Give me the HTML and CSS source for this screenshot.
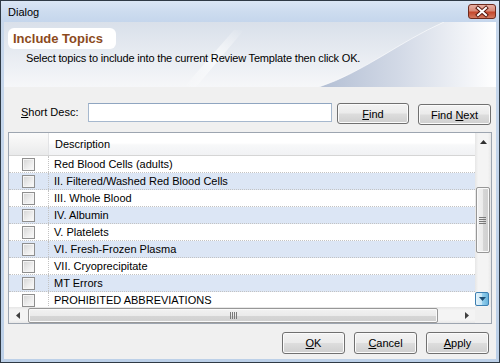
FILE: index.html
```html
<!DOCTYPE html>
<html>
<head>
<meta charset="utf-8">
<title>Dialog</title>
<link rel="stylesheet" href="styles.css">
</head>
<body>
<div class="window">
  <div class="titlebar">
    <span class="title">Dialog</span>
    <div class="close">
      <svg width="28" height="15" viewBox="0 0 28 15">
        <path d="M10 4 L18 11 M18 4 L10 11" stroke="#5a1a10" stroke-width="4" stroke-linecap="square"/>
        <path d="M10 4 L18 11 M18 4 L10 11" stroke="#ffffff" stroke-width="2" stroke-linecap="square"/>
      </svg>
    </div>
  </div>
  <div class="client">
    <div class="banner">
      <svg class="banner-bg" width="492" height="65" viewBox="0 0 492 65">
        <defs>
          <linearGradient id="lg" x1="0" y1="0" x2="0" y2="1">
            <stop offset="0" stop-color="#d9e0ea"/>
            <stop offset="1" stop-color="#f6f7f9"/>
          </linearGradient>
          <linearGradient id="rg" x1="0" y1="0" x2="1" y2="0">
            <stop offset="0" stop-color="#b3bfd4"/>
            <stop offset="0.45" stop-color="#d2d9e6"/>
            <stop offset="1" stop-color="#ffffff"/>
          </linearGradient>
          <linearGradient id="hl" x1="0" y1="1" x2="1" y2="0">
            <stop offset="0" stop-color="#ffffff" stop-opacity="0"/>
            <stop offset="0.5" stop-color="#ffffff" stop-opacity="0.7"/>
            <stop offset="1" stop-color="#ffffff" stop-opacity="0"/>
          </linearGradient>
        </defs>
        <rect x="0" y="0" width="492" height="65" fill="url(#lg)"/>
        <path d="M180 65 L230 8 L240 8 L192 65 Z" fill="url(#hl)"/>
        <path d="M315 65 C360 50 395 20 440 0 L492 0 L492 65 Z" fill="url(#rg)"/>
        <path d="M315 65 C360 50 395 20 440 0" fill="none" stroke="#ffffff" stroke-opacity="0.6" stroke-width="1"/>
      </svg>
      <div class="banner-title">Include Topics</div>
      <div class="banner-sub">Select topics to include into the current Review Template then click OK.</div>
    </div>

    <div class="search">
      <span class="label"><u>S</u>hort Desc:</span>
      <div class="textbox"></div>
      <div class="btn btn-find"><span><u>F</u>ind</span></div>
      <div class="btn btn-next"><span>Find <u>N</u>ext</span></div>
    </div>

    <div class="grid">
      <div class="grid-main">
        <div class="row head">
          <div class="cell chk"></div>
          <div class="cell desc">Description</div>
        </div>
        <div class="row"><div class="cell chk"><span class="box"></span></div><div class="cell desc">Red Blood Cells (adults)</div></div>
        <div class="row alt"><div class="cell chk"><span class="box"></span></div><div class="cell desc">II. Filtered/Washed Red Blood Cells</div></div>
        <div class="row"><div class="cell chk"><span class="box"></span></div><div class="cell desc">III. Whole Blood</div></div>
        <div class="row alt"><div class="cell chk"><span class="box"></span></div><div class="cell desc">IV. Albumin</div></div>
        <div class="row"><div class="cell chk"><span class="box"></span></div><div class="cell desc">V. Platelets</div></div>
        <div class="row alt"><div class="cell chk"><span class="box"></span></div><div class="cell desc">VI. Fresh-Frozen Plasma</div></div>
        <div class="row"><div class="cell chk"><span class="box"></span></div><div class="cell desc">VII. Cryoprecipitate</div></div>
        <div class="row alt"><div class="cell chk"><span class="box"></span></div><div class="cell desc">MT Errors</div></div>
        <div class="row"><div class="cell chk"><span class="box"></span></div><div class="cell desc">PROHIBITED ABBREVIATIONS</div></div>
      </div>
      <div class="vscroll">
        <div class="arrow-v">
          <svg width="7" height="4" viewBox="0 0 7 4"><path d="M0 4 L3.5 0 L7 4 Z" fill="#303030"/></svg>
        </div>
        <div class="vthumb">
          <svg width="7" height="7" viewBox="0 0 7 7"><path d="M0 0.5 H7 M0 2.5 H7 M0 4.5 H7 M0 6.5 H7" stroke="#7a7a7a" stroke-width="1"/></svg>
        </div>
        <div class="vtrack"></div>
        <div class="down-btn">
          <svg width="7" height="4" viewBox="0 0 7 4"><path d="M0 0 L3.5 4 L7 0 Z" fill="#1e4e74"/></svg>
        </div>
      </div>
      <div class="hscroll">
        <div class="arrow-h">
          <svg width="4" height="7" viewBox="0 0 4 7"><path d="M4 0 L0 3.5 L4 7 Z" fill="#404040"/></svg>
        </div>
        <div class="hthumb">
          <svg width="7" height="7" viewBox="0 0 7 7"><path d="M0.5 0 V7 M2.5 0 V7 M4.5 0 V7 M6.5 0 V7" stroke="#7a7a7a" stroke-width="1"/></svg>
        </div>
        <div class="htrack"></div>
        <div class="arrow-h">
          <svg width="4" height="7" viewBox="0 0 4 7"><path d="M0 0 L4 3.5 L0 7 Z" fill="#404040"/></svg>
        </div>
      </div>
      <div class="corner"></div>
    </div>

    <div class="actions">
      <div class="btn btn-act"><span><u>O</u>K</span></div>
      <div class="btn btn-act"><span><u>C</u>ancel</span></div>
      <div class="btn btn-act"><span><u>A</u>pply</span></div>
    </div>
  </div>
</div>
</body>
</html>
```

FILE: styles.css
```css
html, body {
  margin: 0;
  padding: 0;
  background: #ffffff;
}

body {
  font-family: "Liberation Sans", Arial, sans-serif;
  font-size: 11px;
  color: #000000;
}

.window {
  width: 500px;
  height: 363px;
  box-sizing: border-box;
  border: 1px solid #2f3a45;
  background: linear-gradient(#c8d8ec, #bcd0e8);
  display: flex;
  flex-direction: column;
}

.titlebar {
  height: 21px;
  flex: none;
  display: flex;
  align-items: center;
  padding: 0 3px 0 7px;
  background: linear-gradient(#dae6f4 0%, #cddcef 50%, #c5d6ec 100%);
}

.title {
  font-size: 11px;
  color: #000000;
}

.close {
  margin-left: auto;
  width: 28px;
  height: 15px;
  box-sizing: border-box;
  border: 1px solid #6e2a1c;
  border-radius: 3px;
  background: linear-gradient(#e8b0a4 0%, #d88a78 45%, #c4472c 55%, #d3795f 100%);
  display: flex;
  align-items: center;
  justify-content: center;
  overflow: hidden;
}

.close svg {
  display: block;
  margin: -1px;
}

.client {
  flex: 1;
  margin: 0 3px 3px 3px;
  background: #f0f0f0;
  display: flex;
  flex-direction: column;
  min-height: 0;
}

.banner {
  height: 65px;
  flex: none;
  position: relative;
  overflow: hidden;
  box-sizing: border-box;
  padding: 6px 0 0 4px;
}

.banner-bg {
  position: absolute;
  left: 0;
  top: 0;
  z-index: 0;
}

.banner-title {
  position: relative;
  z-index: 1;
  display: inline-block;
  height: 21px;
  line-height: 21px;
  padding: 0 13px 0 5px;
  background: #ffffff;
  border-radius: 6px;
  font-size: 13px;
  font-weight: bold;
  color: #8c4a1c;
}

.banner-sub {
  position: relative;
  z-index: 1;
  margin-top: 2px;
  padding-left: 18px;
  line-height: 14px;
  letter-spacing: -0.17px;
  color: #000000;
}

.search {
  flex: none;
  display: flex;
  align-items: flex-start;
  margin-top: 16px;
  height: 22px;
}

.label {
  width: 67px;
  margin-left: 17px;
  line-height: 19px;
}

.textbox {
  width: 244px;
  height: 19px;
  box-sizing: border-box;
  border: 1px solid #a6b8ce;
  border-top-color: #8fa5c0;
  background: #ffffff;
}

.btn {
  box-sizing: border-box;
  height: 21px;
  border: 1px solid #707070;
  border-radius: 3px;
  background: linear-gradient(#f3f3f3 0%, #ebebeb 48%, #dddddd 52%, #cfcfcf 100%);
  box-shadow: inset 0 0 0 1px #fbfbfb;
  display: flex;
  align-items: center;
  justify-content: center;
  color: #000000;
  white-space: pre;
}

.btn-find {
  width: 72px;
  margin-left: 5px;
}

.btn-next {
  width: 73px;
  margin-left: 9px;
  margin-top: 1px;
}

.grid {
  flex: none;
  margin: 7px 4px 0 4px;
  height: 192px;
  box-sizing: border-box;
  border: 1px solid #9da5b0;
  background: #ffffff;
  display: grid;
  grid-template-columns: 1fr 16px;
  grid-template-rows: 1fr 16px;
  overflow: hidden;
}

.grid-main {
  grid-column: 1;
  grid-row: 1;
  overflow: hidden;
  background: #ffffff;
}

.row {
  display: flex;
  height: 17px;
  box-sizing: border-box;
  border-bottom: 1px dotted #c3c3c3;
}

.row.alt {
  background: #dce6f5;
}

.row.head {
  height: 23px;
  border-bottom: 1px solid #d5d5d5;
  background: linear-gradient(#ffffff 0%, #ffffff 45%, #f7f8f9 55%, #f1f2f4 100%);
}

.cell {
  display: flex;
  align-items: center;
}

.cell.chk {
  width: 40px;
  box-sizing: border-box;
  border-right: 1px dotted #c3c3c3;
  justify-content: center;
}

.row.head .cell.chk {
  border-right: 1px solid #e2e3e5;
  background: linear-gradient(#fbfbfb 0%, #f3f3f3 50%, #e9eaeb 100%);
}

.cell.desc {
  flex: 1;
  padding-left: 5px;
  white-space: nowrap;
}

.row.head .cell.desc {
  padding-left: 6px;
}

.box {
  width: 13px;
  height: 13px;
  box-sizing: border-box;
  border: 1px solid #8f8f8f;
  background: linear-gradient(135deg, #d4d4d4 0%, #eeeeee 60%, #fbfbfb 100%);
  box-shadow: inset 0 0 0 1px #f5f5f5;
}

.vscroll {
  grid-column: 2;
  grid-row: 1;
  display: flex;
  flex-direction: column;
  align-items: center;
  background: linear-gradient(90deg, #e6e6e6 0%, #f4f4f4 20%, #f4f4f4 80%, #e8e8e8 100%);
}

.arrow-v {
  height: 17px;
  width: 100%;
  display: flex;
  align-items: center;
  justify-content: center;
  flex: none;
}

.vthumb {
  margin-top: 37px;
  width: 14px;
  height: 66px;
  flex: none;
  box-sizing: border-box;
  border: 1px solid #979797;
  border-radius: 2px;
  background: linear-gradient(90deg, #f2f2f2 0%, #ebebeb 50%, #d6d6d6 51%, #d0d0d0 100%);
  box-shadow: inset 0 0 0 1px #fafafa;
  display: flex;
  align-items: center;
  justify-content: center;
  margin-left: -1px;
}

.vtrack {
  flex: 1;
}

.down-btn {
  flex: none;
  width: 14px;
  height: 14px;
  margin-bottom: 1px;
  margin-left: -2px;
  box-sizing: border-box;
  border: 1px solid #3c7fb1;
  border-radius: 2px;
  background: linear-gradient(90deg, #e5f4fc 0%, #c4e5f6 50%, #98d1ef 51%, #68b3db 100%);
  display: flex;
  align-items: center;
  justify-content: center;
}

.hscroll {
  grid-column: 1;
  grid-row: 2;
  display: flex;
  align-items: center;
  background: linear-gradient(#e6e6e6 0%, #f4f4f4 20%, #f4f4f4 80%, #e8e8e8 100%);
}

.arrow-h {
  width: 17px;
  height: 100%;
  flex: none;
  display: flex;
  align-items: center;
  justify-content: center;
}

.hthumb {
  margin-left: 2px;
  width: 410px;
  height: 15px;
  flex: none;
  box-sizing: border-box;
  border: 1px solid #979797;
  border-radius: 2px;
  background: linear-gradient(#f2f2f2 0%, #ebebeb 50%, #d6d6d6 51%, #d0d0d0 100%);
  box-shadow: inset 0 0 0 1px #fafafa;
  display: flex;
  align-items: center;
  justify-content: center;
}

.htrack {
  flex: 1;
}

.corner {
  grid-column: 2;
  grid-row: 2;
  background: #f0f0f0;
}

.actions {
  flex: none;
  display: flex;
  justify-content: flex-end;
  gap: 9px;
  margin-top: 8px;
  padding-right: 7px;
}

.btn-act {
  width: 63px;
  height: 22px;
}
```
